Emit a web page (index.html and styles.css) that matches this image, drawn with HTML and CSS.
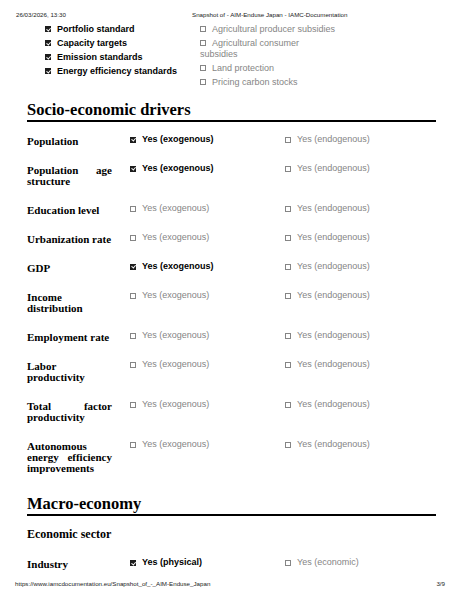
FILE: index.html
```html
<!DOCTYPE html>
<html lang="en">
<head>
<meta charset="utf-8">
<title>Snapshot of - AIM-Enduse Japan - IAMC-Documentation</title>
<link rel="stylesheet" href="styles.css">
</head>
<body>
<header class="print-header">
  <span>26/03/2026, 13:30</span>
  <span>Snapshot of - AIM-Enduse Japan - IAMC-Documentation</span>
</header>

<main class="page">
  <div class="options">
    <ul class="opt-list left">
      <li class="on"><span class="cb"></span>Portfolio standard</li>
      <li class="on"><span class="cb"></span>Capacity targets</li>
      <li class="on"><span class="cb"></span>Emission standards</li>
      <li class="on"><span class="cb"></span>Energy efficiency standards</li>
    </ul>
    <ul class="opt-list right">
      <li><span class="cb"></span>Agricultural producer subsidies</li>
      <li><span class="cb"></span>Agricultural consumer subsidies</li>
      <li><span class="cb"></span>Land protection</li>
      <li><span class="cb"></span>Pricing carbon stocks</li>
    </ul>
  </div>

  <h2 class="section first">Socio-economic drivers</h2>

  <div class="row"><div class="label">Population</div><div class="opt on"><span class="cb"></span>Yes (exogenous)</div><div class="opt"><span class="cb"></span>Yes (endogenous)</div></div>
  <div class="row"><div class="label">Population age structure</div><div class="opt on"><span class="cb"></span>Yes (exogenous)</div><div class="opt"><span class="cb"></span>Yes (endogenous)</div></div>
  <div class="row"><div class="label">Education level</div><div class="opt"><span class="cb"></span>Yes (exogenous)</div><div class="opt"><span class="cb"></span>Yes (endogenous)</div></div>
  <div class="row"><div class="label">Urbanization rate</div><div class="opt"><span class="cb"></span>Yes (exogenous)</div><div class="opt"><span class="cb"></span>Yes (endogenous)</div></div>
  <div class="row"><div class="label">GDP</div><div class="opt on"><span class="cb"></span>Yes (exogenous)</div><div class="opt"><span class="cb"></span>Yes (endogenous)</div></div>
  <div class="row"><div class="label">Income distribution</div><div class="opt"><span class="cb"></span>Yes (exogenous)</div><div class="opt"><span class="cb"></span>Yes (endogenous)</div></div>
  <div class="row"><div class="label">Employment rate</div><div class="opt"><span class="cb"></span>Yes (exogenous)</div><div class="opt"><span class="cb"></span>Yes (endogenous)</div></div>
  <div class="row"><div class="label">Labor productivity</div><div class="opt"><span class="cb"></span>Yes (exogenous)</div><div class="opt"><span class="cb"></span>Yes (endogenous)</div></div>
  <div class="row"><div class="label">Total factor productivity</div><div class="opt"><span class="cb"></span>Yes (exogenous)</div><div class="opt"><span class="cb"></span>Yes (endogenous)</div></div>
  <div class="row"><div class="label">Autonomous energy efficiency improvements</div><div class="opt"><span class="cb"></span>Yes (exogenous)</div><div class="opt"><span class="cb"></span>Yes (endogenous)</div></div>

  <h2 class="section second">Macro-economy</h2>
  <h3 class="subsection">Economic sector</h3>

  <div class="row industry"><div class="label">Industry</div><div class="opt on"><span class="cb"></span>Yes (physical)</div><div class="opt"><span class="cb"></span>Yes (economic)</div></div>
</main>

<footer class="print-footer">
  <span>https://www.iamcdocumentation.eu/Snapshot_of_-_AIM-Enduse_Japan</span>
  <span>3/9</span>
</footer>
</body>
</html>
```

FILE: styles.css
```css
* {
  box-sizing: border-box;
}

html,
body {
  margin: 0;
  padding: 0;
}

body {
  width: 463px;
  height: 599px;
  overflow: hidden;
  background: #fff;
  color: #000;
  display: flex;
  flex-direction: column;
  font-family: "Liberation Sans", Arial, sans-serif;
}

/* print header / footer */
.print-header {
  display: grid;
  grid-template-columns: 176px auto;
  padding: 11px 0 0 16px;
  font-size: 6.2px;
  line-height: 8px;
  color: #222;
}

.print-footer {
  margin-top: auto;
  display: flex;
  justify-content: space-between;
  padding: 0 18px 11px 15px;
  font-size: 6.2px;
  line-height: 8px;
  color: #222;
}

.page {
  padding: 0 27px;
}

/* top option lists */
.options {
  display: flex;
  margin-top: 4.5px;
}

.opt-list {
  list-style: none;
  margin: 0;
  padding: 0;
  font-size: 9px;
  line-height: 11px;
}

.opt-list li {
  margin-bottom: 3px;
  color: #858585;
}

.opt-list li.on {
  color: #000;
  font-weight: bold;
}

.opt-list.left {
  margin-left: 18px;
  width: 155px;
}

.opt-list.right {
  width: 137px;
}

/* checkboxes */
.cb {
  display: inline-block;
  position: relative;
  width: 6px;
  height: 6px;
  margin-right: 6px;
  border: 1px solid #858585;
  vertical-align: -0.5px;
}

.on .cb {
  background: #1c1c1c;
  border-color: #1c1c1c;
}

.on .cb::after {
  content: "";
  position: absolute;
  left: 1.3px;
  top: -0.3px;
  width: 1.8px;
  height: 3.4px;
  border: solid #fff;
  border-width: 0 1px 1px 0;
  transform: rotate(40deg);
}

/* section headings */
.section {
  margin: 0;
  font-family: "Liberation Serif", "Times New Roman", serif;
  font-weight: bold;
  font-size: 16.5px;
  line-height: 20px;
  border-bottom: 2px solid #000;
}

.section.first {
  margin-top: 9px;
  margin-bottom: 6.5px;
}

.section.second {
  margin-top: 10.4px;
}

.subsection {
  margin: 11px 0 0;
  font-family: "Liberation Serif", "Times New Roman", serif;
  font-weight: bold;
  font-size: 12px;
  line-height: 14px;
}

/* rows */
.row {
  display: grid;
  grid-template-columns: 103px 155px 1fr;
  padding: 6px 0 10px;
}

.row.industry {
  margin-top: 10px;
}

.label {
  padding: 2px 18px 0 0;
  font-family: "Liberation Serif", "Times New Roman", serif;
  font-weight: bold;
  font-size: 11px;
  line-height: 11px;
  text-align: justify;
}

.opt {
  font-size: 9px;
  line-height: 11px;
  color: #858585;
}

.opt.on {
  color: #000;
  font-weight: bold;
}
```
